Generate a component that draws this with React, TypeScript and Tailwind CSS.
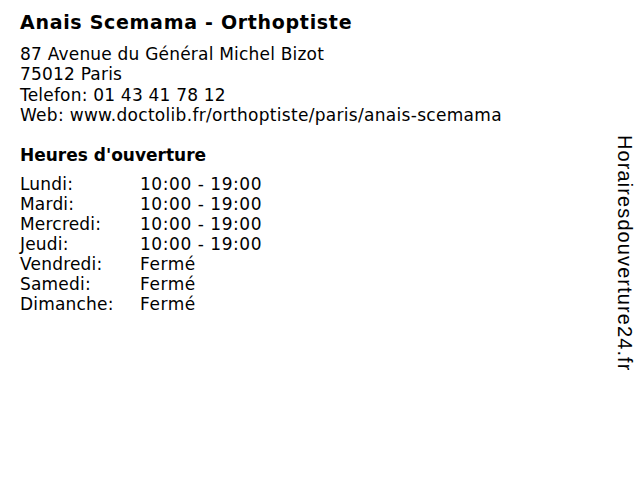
import React from "react";

const hours: [string, string][] = [
  ["Lundi:", "10:00 - 19:00"],
  ["Mardi:", "10:00 - 19:00"],
  ["Mercredi:", "10:00 - 19:00"],
  ["Jeudi:", "10:00 - 19:00"],
  ["Vendredi:", "Fermé"],
  ["Samedi:", "Fermé"],
  ["Dimanche:", "Fermé"],
];

export default function App() {
  return (
    <div className="relative w-[640px] h-[480px] bg-white text-black overflow-hidden" style={{ fontFamily: '"DejaVu Sans", Verdana, sans-serif' }}>
      <div className="pl-[20px] pt-[10px]">
        <h1 className="text-[19px] font-bold leading-[24px] tracking-[0.7px]">Anais Scemama - Orthoptiste</h1>
        <div className="mt-[10px] text-[17px] leading-[20.3px] tracking-[0.2px]">
          <div>87 Avenue du Général Michel Bizot</div>
          <div>75012 Paris</div>
          <div>Telefon: 01 43 41 78 12</div>
          <div className="tracking-[0.3px]">Web: www.doctolib.fr/orthoptiste/paris/anais-scemama</div>
        </div>
        <h2 className="mt-[20px] text-[17px] font-bold leading-[20px]">Heures d'ouverture</h2>
        <div className="mt-[9px] text-[17px] leading-[20px] tracking-[0.2px]">
          {hours.map(([d, h]) => (
            <div key={d} className="flex">
              <div className="w-[120px]">{d}</div>
              <div className="tracking-[0.55px]">{h}</div>
            </div>
          ))}
        </div>
      </div>
      <div
        className="absolute right-[3px] top-[135px] text-[20px] leading-[24px] tracking-[1.1px] [writing-mode:vertical-rl]"
        style={{ fontFamily: '"Liberation Sans", Arial, sans-serif' }}
      >
        Horairesdouverture24.fr
      </div>
    </div>
  );
}
